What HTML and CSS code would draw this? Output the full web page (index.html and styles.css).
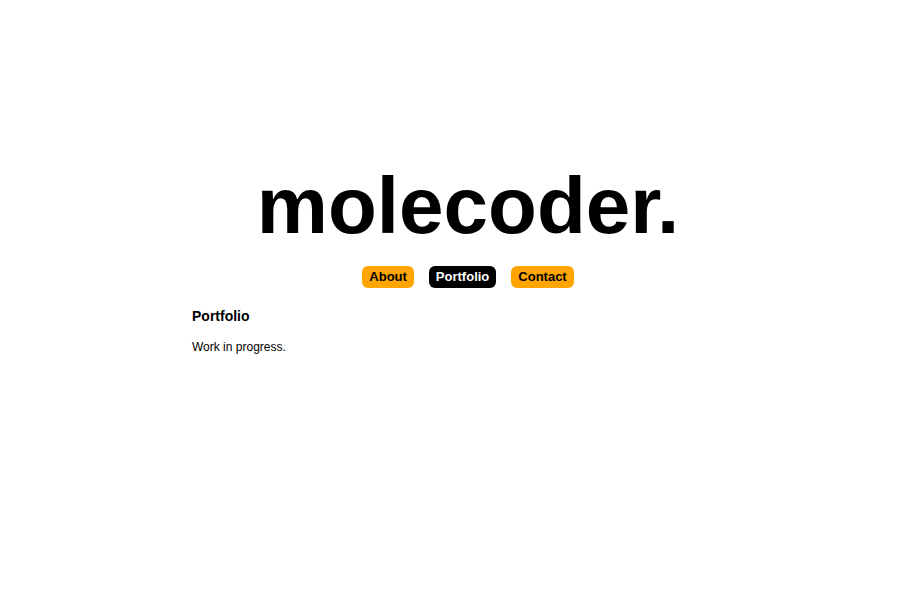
FILE: index.html
```html
<!DOCTYPE html>
<html>
<head>
<meta charset="utf-8">
<link rel="stylesheet" href="styles.css">
</head>
<body>
<header class="masthead">
  <h1 class="logo">molecoder.</h1>
  <nav class="nav">
    <a class="nav-btn">About</a>
    <a class="nav-btn active">Portfolio</a>
    <a class="nav-btn">Contact</a>
  </nav>
</header>
<main class="content">
  <h2 class="section-title">Portfolio</h2>
  <p class="section-text">Work in progress.</p>
</main>
</body>
</html>
```
FILE: styles.css
```css
html, body {
  margin: 0;
  padding: 0;
  background: #fff;
  font-family: "Liberation Sans", Arial, sans-serif;
  color: #000;
}
.masthead {
  display: flex;
  flex-direction: column;
  align-items: center;
  padding-top: 160px;
  padding-left: 20px;
}
.logo {
  margin: 0;
  font-size: 80px;
  font-weight: bold;
  line-height: 92px;
}
.nav {
  display: flex;
  gap: 15px;
  margin-top: 14px;
}
.nav-btn {
  display: block;
  background: #ffa500;
  color: #000;
  font-size: 13px;
  font-weight: bold;
  line-height: 22px;
  padding: 0 7px;
  border-radius: 6px;
}
.nav-btn.active {
  background: #000;
  color: #fff;
}
.content {
  width: 532px;
  margin: 20px auto 0;
}
.section-title {
  margin: 0;
  font-size: 14px;
  font-weight: bold;
}
.section-text {
  margin: 16px 0 0;
  font-size: 12px;
}
```
